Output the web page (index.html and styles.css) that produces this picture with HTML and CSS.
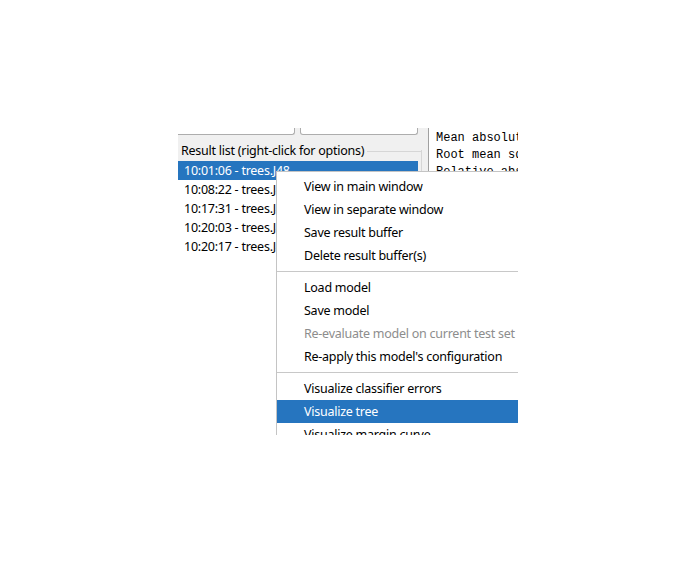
FILE: index.html
```html
<!DOCTYPE html>
<html>
<head>
<meta charset="utf-8">
<link rel="stylesheet" href="styles.css">
</head>
<body>
<div class="clip">
  <div class="left">
    <div class="buttons">
      <div class="btn btn-first"></div>
      <div class="btn btn-second"></div>
    </div>
    <div class="group">
      <div class="group-head">
        <span class="group-title">Result list (right-click for options)</span>
        <span class="group-line"></span>
      </div>
      <div class="group-body">
        <ul class="list">
          <li class="row selected">10:01:06 - trees.J48</li>
          <li class="row">10:08:22 - trees.J48</li>
          <li class="row">10:17:31 - trees.J48</li>
          <li class="row">10:20:03 - trees.J48</li>
          <li class="row">10:20:17 - trees.J48</li>
        </ul>
      </div>
    </div>
  </div>
  <div class="output">
    <pre class="output-text">Mean absolute error
Root mean squared error
Relative absolute error
Root relative squared error</pre>
  </div>
  <div class="menu">
    <div class="item">View in main window</div>
    <div class="item">View in separate window</div>
    <div class="item">Save result buffer</div>
    <div class="item">Delete result buffer(s)</div>
    <div class="sep"></div>
    <div class="item">Load model</div>
    <div class="item">Save model</div>
    <div class="item disabled">Re-evaluate model on current test set</div>
    <div class="item">Re-apply this model's configuration</div>
    <div class="sep"></div>
    <div class="item">Visualize classifier errors</div>
    <div class="item active">Visualize tree</div>
    <div class="item">Visualize margin curve</div>
    <div class="item">Visualize threshold curve</div>
  </div>
</div>
</body>
</html>
```

FILE: styles.css
```css
html, body {
  margin: 0;
  padding: 0;
  background: #ffffff;
}

body {
  padding: 128px 0 0 178px;
  font-family: "Noto Sans", "Open Sans", sans-serif;
  font-size: 12.5px;
  letter-spacing: -0.25px;
  color: #000000;
}

.clip {
  position: relative;
  width: 340px;
  height: 307px;
  overflow: hidden;
  background: #f0f0f0;
  display: flex;
}

.left {
  width: 250px;
  flex: none;
  display: flex;
  flex-direction: column;
}

.buttons {
  height: 7px;
  display: flex;
  gap: 5px;
  margin-left: -2px;
}

.btn {
  height: 6px;
  background: #ffffff;
  border: 1px solid #adadad;
  border-top: none;
  border-radius: 0 0 3px 3px;
}

.btn-first {
  width: 118px;
  border-left: none;
}

.btn-second {
  width: 116px;
}

.group {
  flex: 1;
  display: flex;
  flex-direction: column;
  margin-right: 6px;
}

.group-head {
  height: 26px;
  display: flex;
  align-items: center;
  padding-left: 3px;
  padding-top: 5px;
  box-sizing: border-box;
  gap: 3px;
}

.group-title {
  line-height: 18px;
  white-space: nowrap;
  color: #000000;
}

.group-line {
  flex: 1;
  height: 1px;
  background: #d6d6d6;
  align-self: center;
  margin-top: 2px;
}

.group-body {
  flex: 1;
  border-right: 1px solid #d6d6d6;
  margin-top: -11px;
  padding-top: 11px;
  padding-right: 3px;
}

.list {
  list-style: none;
  margin: 0;
  padding: 0;
  background: #ffffff;
  height: 100%;
}

.row {
  height: 19px;
  line-height: 19px;
  padding-left: 6px;
  white-space: nowrap;
  overflow: hidden;
}

.row.selected {
  background: #2675bf;
  color: #ffffff;
}

.output {
  flex: 1;
  background: #ffffff;
  border-left: 1px solid #a0a0a0;
  padding-left: 7px;
  padding-top: 2px;
  overflow: hidden;
}

.output-text {
  margin: 0;
  font-family: "Liberation Mono", "Courier New", monospace;
  font-size: 12px;
  letter-spacing: 0;
  line-height: 17px;
  color: #000000;
  white-space: pre;
}

.menu {
  position: absolute;
  left: 98px;
  top: 43px;
  width: 300px;
  background: #ffffff;
  border: 1px solid #c4c4c4;
  padding-top: 3px;
}

.item {
  height: 23px;
  line-height: 23px;
  padding-left: 27px;
  white-space: nowrap;
  color: #000000;
}

.item.disabled {
  color: #8d8d8d;
}

.item.active {
  background: #2675bf;
  color: #ffffff;
}

.sep {
  height: 9px;
  display: flex;
  align-items: center;
}

.sep::before {
  content: "";
  display: block;
  width: 100%;
  height: 1px;
  background: #c8c8c8;
}
```
